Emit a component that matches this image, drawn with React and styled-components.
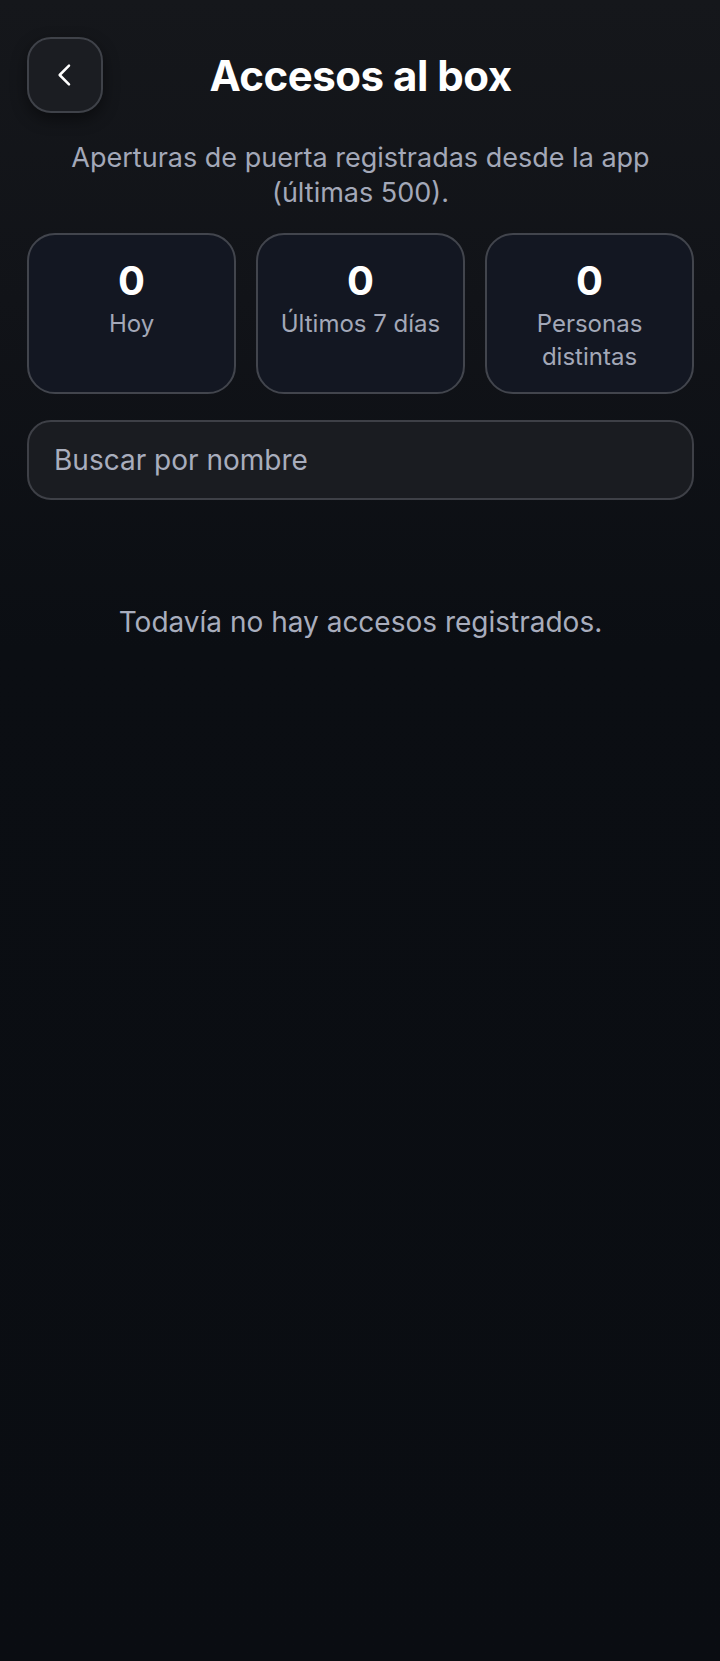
import React from "react";
import styled, { createGlobalStyle } from "styled-components";

const Global = createGlobalStyle`
  html, body { margin: 0; padding: 0; }
  body {
    background: #0a0d12;
    font-family: Inter, "Noto Sans", "Liberation Sans", sans-serif;
    -webkit-font-smoothing: antialiased;
  }
  * { box-sizing: border-box; }
`;

const Page = styled.div`
  min-height: 1661px;
  background: linear-gradient(180deg, #15171b 0%, #111318 300px, #0b0e13 650px, #0a0d12 100%);
  padding: 37px 26px 0 27px;
  display: flex;
  flex-direction: column;
`;

const Header = styled.header`
  display: grid;
  grid-template-columns: 76px 1fr 76px;
  align-items: center;
  height: 76px;
`;

const BackButton = styled.button`
  width: 76px;
  height: 76px;
  border-radius: 24px;
  background: #1b1d22;
  border: 2px solid #3f4249;
  box-shadow: 0 6px 16px rgba(0, 0, 0, 0.45);
  display: flex;
  align-items: center;
  justify-content: center;
  color: #ffffff;
  padding: 0;
`;

const Title = styled.h1`
  margin: 0;
  text-align: center;
  color: #ffffff;
  font-size: 42px;
  font-weight: 700;
  letter-spacing: -0.5px;
`;

const Subtitle = styled.p`
  margin: 27px 0 0;
  text-align: center;
  color: #a3a8b8;
  font-size: 27px;
  line-height: 35px;
`;

const Stats = styled.div`
  margin-top: 23px;
  display: grid;
  grid-template-columns: repeat(3, 1fr);
  gap: 20px;
`;

const StatCard = styled.div`
  height: 161px;
  border-radius: 28px;
  background: #131722;
  border: 2px solid #42454d;
  display: flex;
  flex-direction: column;
  align-items: center;
  padding-top: 22px;
  text-align: center;
`;

const StatValue = styled.div`
  color: #ffffff;
  font-size: 40px;
  font-weight: 700;
  line-height: 48px;
`;

const StatLabel = styled.div`
  color: #a3a8b8;
  font-size: 24px;
  line-height: 33px;
  margin-top: 2px;
`;

const Search = styled.input`
  margin-top: 26px;
  height: 80px;
  width: 100%;
  border-radius: 24px;
  background: #1a1c21;
  border: 2px solid #3e4047;
  padding: 0 25px;
  font-family: inherit;
  font-size: 28px;
  color: #ffffff;
  outline: none;
  &::placeholder { color: #a8adbd; }
`;

const Empty = styled.p`
  margin: 102px 0 0;
  text-align: center;
  color: #a8adbd;
  font-size: 28px;
  line-height: 40px;
`;

export default function App() {
  const stats = [
    { value: 0, label: "Hoy" },
    { value: 0, label: "Últimos 7 días" },
    { value: 0, label: "Personas distintas" },
  ];
  return (
    <>
      <Global />
      <Page>
        <Header>
          <BackButton aria-label="Volver">
            <svg width="32" height="32" viewBox="0 0 24 24" fill="none" stroke="currentColor" strokeWidth="1.9" strokeLinecap="round" strokeLinejoin="round">
              <path d="M15 5L8 12l7 7" />
            </svg>
          </BackButton>
          <Title>Accesos al box</Title>
          <span />
        </Header>
        <Subtitle>
          Aperturas de puerta registradas desde la app
          <br />
          (últimas 500).
        </Subtitle>
        <Stats>
          {stats.map((s) => (
            <StatCard key={s.label}>
              <StatValue>{s.value}</StatValue>
              <StatLabel>{s.label}</StatLabel>
            </StatCard>
          ))}
        </Stats>
        <Search placeholder="Buscar por nombre" />
        <Empty>Todavía no hay accesos registrados.</Empty>
      </Page>
    </>
  );
}
